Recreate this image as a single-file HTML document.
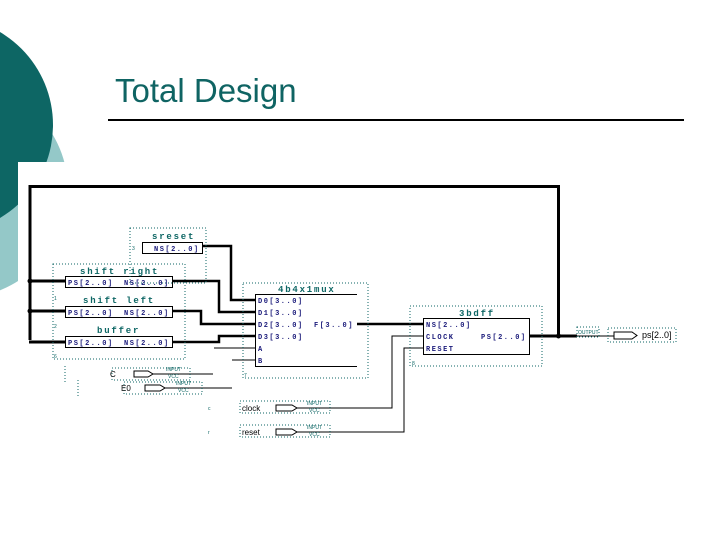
<!DOCTYPE html>
<html><head><meta charset="utf-8"><style>
html,body{margin:0;padding:0;width:720px;height:540px;overflow:hidden;background:#fff;}
svg{display:block}
</style></head><body>
<svg width="720" height="540" viewBox="0 0 720 540" xmlns="http://www.w3.org/2000/svg" font-family="Liberation Mono, monospace">
<circle cx="-40" cy="190" r="108" fill="#94c8c8"/>
<circle cx="-55" cy="125" r="108" fill="#0d6664"/>
<rect x="18" y="162" width="702" height="378" fill="#fff"/>
<text x="115" y="102" font-family="Liberation Sans, sans-serif" font-size="33" fill="#0f6463">Total Design</text>
<rect x="108" y="119" width="576" height="2" fill="#000"/>

<g fill="none" stroke="#000">
<path d="M30 340 V186.5 H558.5 V336" stroke-width="3"/>
<path d="M29 281 H65 M29 311 H65 M29 342 H65" stroke-width="3"/>
<path d="M202 246 H231 V300 H255 M172 281 H219 V312 H255 M172 311 H201 V324 H255 M172 342 H219 V336 H255" stroke-width="2.5"/>
<path d="M214 348 H255 M232 360 H255" stroke-width="1"/>
<path d="M357 324 H423" stroke-width="2.5"/>
<path d="M529 336 H577" stroke-width="3"/>
<path d="M577 336 H614" stroke-width="1"/>
<path d="M297 408 H392 V336 H423 M297 432 H404 V348 H423" stroke-width="1"/>
<path d="M153 374 H213 M165 388 H232" stroke-width="1"/>
<rect x="142.5" y="242.5" width="60" height="11" stroke-width="1"/>
<rect x="65.5" y="276.5" width="107" height="11"/>
<rect x="65.5" y="306.5" width="107" height="11"/>
<rect x="65.5" y="336.5" width="107" height="11"/>
<path d="M357 294.5 H255.5 V366.5 H357"/>
<rect x="423.5" y="318.5" width="106" height="36"/>
<path d="M134 371 H148 L153 374 L148 377 H134 Z M145 385 H160 L165 388 L160 391 H145 Z M276 405 H292 L297 408 L292 411 H276 Z M276 429 H292 L297 432 L292 435 H276 Z M614 332 H632 L637 335.5 L632 339 H614 Z"/>
</g>
<circle cx="30" cy="281" r="2.5"/><circle cx="30" cy="311" r="2.5"/><circle cx="558.5" cy="336" r="2.5"/>

<g fill="none" stroke="#0d6664" stroke-width="1" stroke-dasharray="1 2">
<rect x="130" y="228" width="76" height="55"/>
<rect x="53" y="264" width="132" height="95"/>
<rect x="243" y="283" width="125" height="95"/>
<rect x="410" y="306" width="132" height="60"/>
<rect x="577" y="327" width="22" height="10"/>
<rect x="608" y="328" width="68" height="14"/>
<rect x="112" y="368" width="78" height="12"/>
<rect x="124" y="382" width="78" height="12"/>
<rect x="240" y="401" width="90" height="12"/>
<rect x="240" y="425" width="90" height="12"/>
<path d="M65 366 V384 M78 380 V398"/>
</g>

<g font-size="9" fill="#0d6664" font-weight="bold" letter-spacing="1.8">
<text x="152" y="239">sreset</text>
<text x="80" y="274">shift right</text>
<text x="83" y="303">shift left</text>
<text x="97" y="333">buffer</text>
<text x="278" y="292">4b4x1mux</text>
<text x="459" y="316">3bdff</text>
</g>
<g font-size="7" fill="#1a1a7a" font-weight="bold" letter-spacing="1.5">
<text x="154" y="251">NS[2..0]</text>
<text x="68" y="285">PS[2..0]</text><text x="124" y="285">NS[2..0]</text>
<text x="68" y="315">PS[2..0]</text><text x="124" y="315">NS[2..0]</text>
<text x="68" y="345">PS[2..0]</text><text x="124" y="345">NS[2..0]</text>
<text x="258" y="303">D0[3..0]</text>
<text x="258" y="315">D1[3..0]</text>
<text x="258" y="327">D2[3..0]</text><text x="314" y="327">F[3..0]</text>
<text x="258" y="339">D3[3..0]</text>
<text x="258" y="351">A</text>
<text x="258" y="363">B</text>
<text x="426" y="327">NS[2..0]</text>
<text x="426" y="339">CLOCK</text>
<text x="426" y="351">RESET</text>
<text x="481" y="339">PS[2..0]</text>
</g>
<g font-family="Liberation Sans, sans-serif" font-size="8" fill="#000">
<text x="110" y="377">C</text>
<text x="121" y="391">E0</text>
<text x="242" y="411">clock</text>
<text x="242" y="435">reset</text>
<text x="642" y="338" font-size="9">ps[2..0]</text>
</g>
<g font-family="Liberation Sans, sans-serif" font-size="5" fill="#0d6664">
<text x="166" y="371">INPUT</text><text x="168" y="378">VCC</text>
<text x="176" y="385">INPUT</text><text x="178" y="392">VCC</text>
<text x="307" y="405">INPUT</text><text x="309" y="412">VCC</text>
<text x="307" y="429">INPUT</text><text x="309" y="436">VCC</text>
<text x="578" y="334">OUTPUT</text>
<text x="132" y="250">3</text><text x="54" y="300">1</text><text x="54" y="328">2</text><text x="54" y="358">6</text>
<text x="244" y="377">7</text><text x="412" y="365">8</text><text x="208" y="410">c</text><text x="208" y="434">r</text>
</g>
</svg>
</body></html>
